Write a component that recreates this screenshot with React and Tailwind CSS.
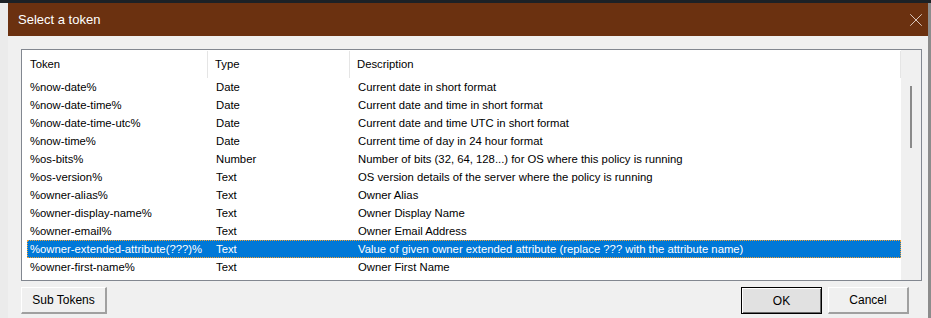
import { X } from 'lucide-react'

const rows = [
  ['%now-date%', 'Date', 'Current date in short format'],
  ['%now-date-time%', 'Date', 'Current date and time in short format'],
  ['%now-date-time-utc%', 'Date', 'Current date and time UTC in short format'],
  ['%now-time%', 'Date', 'Current time of day in 24 hour format'],
  ['%os-bits%', 'Number', 'Number of bits (32, 64, 128...) for OS where this policy is running'],
  ['%os-version%', 'Text', 'OS version details of the server where the policy is running'],
  ['%owner-alias%', 'Text', 'Owner Alias'],
  ['%owner-display-name%', 'Text', 'Owner Display Name'],
  ['%owner-email%', 'Text', 'Owner Email Address'],
  ['%owner-extended-attribute(???)%', 'Text', 'Value of given owner extended attribute (replace ??? with the attribute name)'],
  ['%owner-first-name%', 'Text', 'Owner First Name'],
]

const SELECTED = 9

const Button = ({ children, primary }) => (
  <button
    className={
      primary
        ? 'h-[27px] w-full border border-black bg-[#e1e1e1] text-[12px] text-black shadow-[inset_1px_1px_0_#fff,inset_-1px_-1px_0_#696969]'
        : 'h-[27px] w-full border-t border-l border-white border-r-2 border-b-2 border-r-[#a0a0a0] border-b-[#a0a0a0] bg-[#f0f0f0] text-[12px] text-black'
    }
  >
    {children}
  </button>
)

const App = () => {
  return (
    <div
      className="flex h-[318px] w-[931px] flex-col overflow-hidden bg-[#ebebeb]"
      style={{ fontFamily: '"Liberation Sans", Arial, sans-serif' }}
    >
      <div className="h-[3px] bg-[#1c2126]" />
      <div className="flex flex-1">
        <div className="w-[8px]" />
        <div className="flex w-[920px] flex-col">
          <div className="flex h-[33px] items-center justify-between bg-[#6b3110] pl-[10px] pr-[1px]">
            <span className="text-[13px] text-white">Select a token</span>
            <X size={22} strokeWidth={0.9} className="text-[#f0e8e2]" />
          </div>
          <div className="flex-1 bg-[#f0f0f0] px-[13px] pt-[13px]">
            <div className="flex h-[232px] w-[901px] border border-[#828790] bg-white">
              <div className="flex flex-1 flex-col">
                <div className="flex h-[28px] items-center pt-[1px] text-[11.3px] text-black">
                  <div className="flex h-full w-[186px] items-center border-r border-[#e5e5e5] pl-[8px]">Token</div>
                  <div className="flex h-full w-[142px] items-center border-r border-[#e5e5e5] pl-[7px]">Type</div>
                  <div className="flex h-full flex-1 items-center border-r border-[#e5e5e5] pl-[7px]">Description</div>
                </div>
                {rows.map(([token, type, desc], i) => (
                  <div
                    key={token}
                    className={
                      i === SELECTED
                        ? 'ml-[5px] flex h-[18px] items-center border border-dotted border-[#f5a030] bg-[#0078d7] text-[11.3px] text-white'
                        : 'flex h-[18px] items-center text-[11.3px] text-black'
                    }
                  >
                    <div className={i === SELECTED ? 'w-[180px] pl-[2px] whitespace-nowrap' : 'w-[186px] pl-[8px] whitespace-nowrap'}>{token}</div>
                    <div className="w-[142px] pl-[8px]">{type}</div>
                    <div className="flex-1 pl-[8px] whitespace-nowrap">{desc}</div>
                  </div>
                ))}
              </div>
              <div className="flex w-[20px] justify-center bg-[#f0f0f0] pt-[36px]">
                <div className="h-[62px] w-[2px] bg-[#8a8a8a]" />
              </div>
            </div>
            <div className="mt-[6px] flex items-center justify-between pr-[6px]">
              <div className="w-[86px]">
                <Button>Sub Tokens</Button>
              </div>
              <div className="flex gap-[6px]">
                <div className="w-[81px]">
                  <Button primary>OK</Button>
                </div>
                <div className="w-[81px]">
                  <Button>Cancel</Button>
                </div>
              </div>
            </div>
          </div>
        </div>
        <div className="w-[3px] bg-[#8c8c8c]" />
      </div>
    </div>
  )
}

export default App
